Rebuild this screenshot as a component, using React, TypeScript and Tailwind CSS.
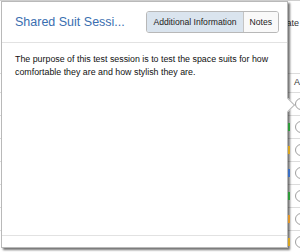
import React from 'react';

const rows = ['', '#2e9b3a', '#d9a520', '#3a6fc4', '#2e9b3a', '#e0962a', '#d9a520'];

function BackgroundTable() {
  return (
    <div className="w-[300px] text-[9px] text-[#333]" style={{ fontFamily: '"Liberation Sans", Arial, sans-serif' }}>
      {/* header row, mostly hidden */}
      <div className="h-[73px] border-t border-[#cfcfcf] pt-[16px] pl-[270px] whitespace-nowrap overflow-hidden">
        Update
      </div>
      <div className="h-[19px] border-t border-[#dcdcdc] pl-[294px] flex items-center overflow-hidden">A</div>
      {rows.map((c, i) => (
        <div key={i} className="h-[23px] border-t border-[#dcdcdc] flex items-center pl-[288px] overflow-hidden">
          <span className="relative z-10 shrink-0 w-[2px] h-[8px]" style={{ backgroundColor: c || 'transparent' }} />
          <span className="ml-[5px] w-[12px] h-[12px] shrink-0 rounded-full border border-[#a0a0a0] bg-white" />
        </div>
      ))}
    </div>
  );
}

export default function App() {
  return (
    <div className="relative w-[300px] h-[252px] overflow-hidden bg-white">
      <BackgroundTable />

      {/* popover */}
      <div
        className="absolute left-[1px] top-[1px] w-[287px] h-[247px] flex flex-col bg-white border border-[#b9b9b9] shadow-[2px_2px_2px_rgba(0,0,0,0.55)]"
        style={{ fontFamily: '"Liberation Sans", Arial, sans-serif' }}
      >
        {/* arrow */}
        <div className="absolute right-[-6px] top-[98px] w-[10px] h-[10px] rotate-45 bg-white border-t border-r border-[#b9b9b9]" />

        <div className="h-[41px] shrink-0 flex items-center pl-[13px] pr-[8px] border-b border-[#e2e2e2]">
          <h2 className="text-[12.5px] text-[#3a6eb0] whitespace-nowrap">Shared Suit Sessi...</h2>
          <div className="ml-auto flex h-[22px] rounded-[3px] border border-[#b8b8b8] overflow-hidden text-[8.6px] text-[#222]">
            <button className="px-[6px] bg-[#dae4ee]">Additional Information</button>
            <button className="px-[6px] bg-[#f9f9f9] border-l border-[#c4c4c4]">Notes</button>
          </div>
        </div>

        <div className="flex-1 px-[13px] pt-[10px] text-[8.85px] leading-[12.5px] text-[#111]">
          The purpose of this test session is to test the space suits for how comfortable they are and how stylish they are.
        </div>

        <div className="h-[12px] shrink-0 border-t border-[#e2e2e2]" />
      </div>
    </div>
  );
}
